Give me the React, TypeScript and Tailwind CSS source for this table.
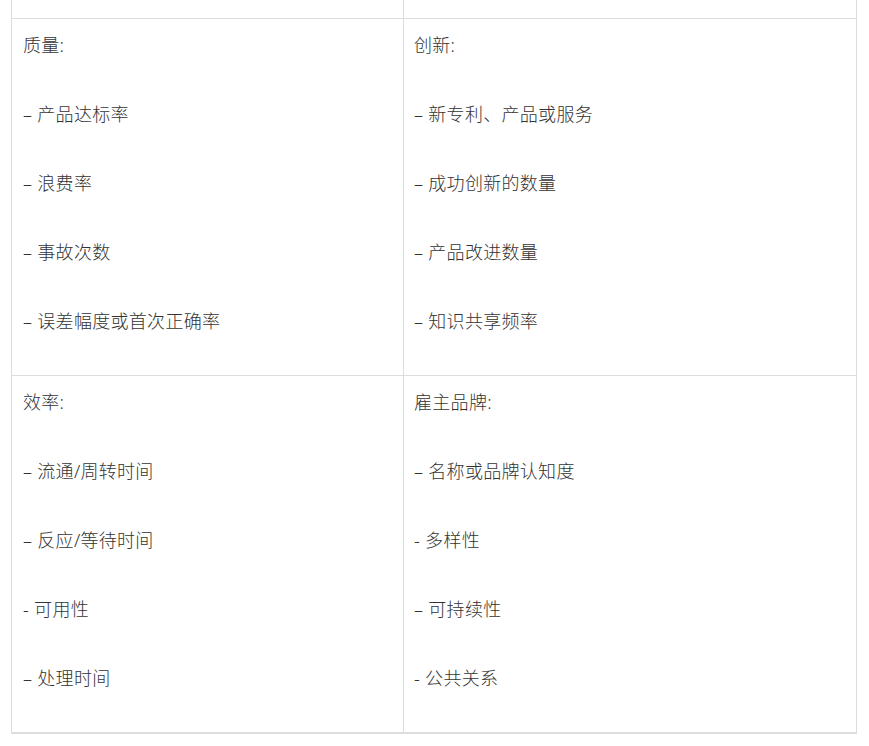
const rows = [
    {
        left: { title: "质量:", items: ["– 产品达标率", "– 浪费率", "– 事故次数", "– 误差幅度或首次正确率"] },
        right: { title: "创新:", items: ["– 新专利、产品或服务", "– 成功创新的数量", "– 产品改进数量", "– 知识共享频率"] },
    },
    {
        left: { title: "效率:", items: ["– 流通/周转时间", "– 反应/等待时间", "- 可用性", "– 处理时间"] },
        right: { title: "雇主品牌:", items: ["– 名称或品牌认知度", "- 多样性", "– 可持续性", "- 公共关系"] },
    },
];

type CellProps = { title: string; items: string[] };

function Cell({ title, items, side }: CellProps & { side: "left" | "right" }) {
    return (
        <div
            className={
                side === "left"
                    ? "border-r border-[#dddddd] pl-[11px] pt-[13px] pb-[40px] flex flex-col gap-[42px]"
                    : "pl-[10px] pt-[13px] pb-[40px] flex flex-col gap-[42px]"
            }
        >
            <p className="leading-[27px]">{title}</p>
            {items.map((item) => (
                <p key={item} className="leading-[27px]">
                    {item}
                </p>
            ))}
        </div>
    );
}

export default function App() {
    return (
        <div className="bg-white min-h-[746px] w-[869px]">
            <div
                className="ml-[11px] w-[846px] border-l border-r border-b-2 border-[#dddddd] text-[18px] font-light tracking-[0.3px] text-[#333333]"
                style={{ fontFamily: '"Noto Sans", "Noto Sans CJK SC", sans-serif' }}
            >
                <div className="grid grid-cols-[392px_452px] h-[19px] border-b border-[#dddddd]">
                    <div className="border-r border-[#dddddd]" />
                    <div />
                </div>
                {rows.map((row, i) => (
                    <div
                        key={i}
                        className={
                            i === 0
                                ? "grid grid-cols-[392px_452px] border-b border-[#dddddd]"
                                : "grid grid-cols-[392px_452px]"
                        }
                    >
                        <Cell {...row.left} side="left" />
                        <Cell {...row.right} side="right" />
                    </div>
                ))}
            </div>
        </div>
    );
}
